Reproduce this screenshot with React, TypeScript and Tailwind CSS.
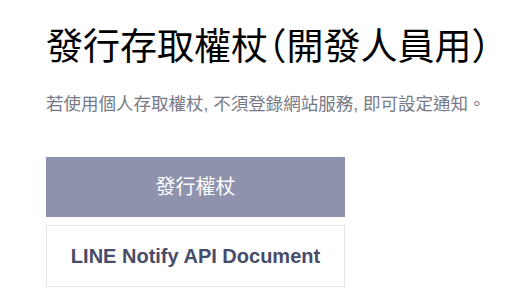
export default function App() {
  return (
    <div
      className="min-h-[296px] bg-white pl-[46px] pt-[26px]"
      style={{ fontFamily: '"Liberation Sans", "Noto Sans CJK TC", sans-serif' }}
    >
      <h1 className="whitespace-nowrap text-[37px] leading-[44px] text-black [font-feature-settings:'halt']">
        發行存取權杖（開發人員用）
      </h1>
      <p className="mt-[22px] whitespace-nowrap text-[17.5px] leading-[24px] text-[#777a86]">
        若使用個人存取權杖, 不須登錄網站服務, 即可設定通知。
      </p>
      <div className="mt-[41px] flex w-[299px] flex-col gap-2">
        <button className="h-[60px] w-full bg-[#8e92ad] text-[20px] text-white">
          發行權杖
        </button>
        <button className="h-[62px] w-full border border-[#e5e5e5] bg-white text-[20px] font-bold text-[#474c6a]">
          LINE Notify API Document
        </button>
      </div>
    </div>
  );
}
